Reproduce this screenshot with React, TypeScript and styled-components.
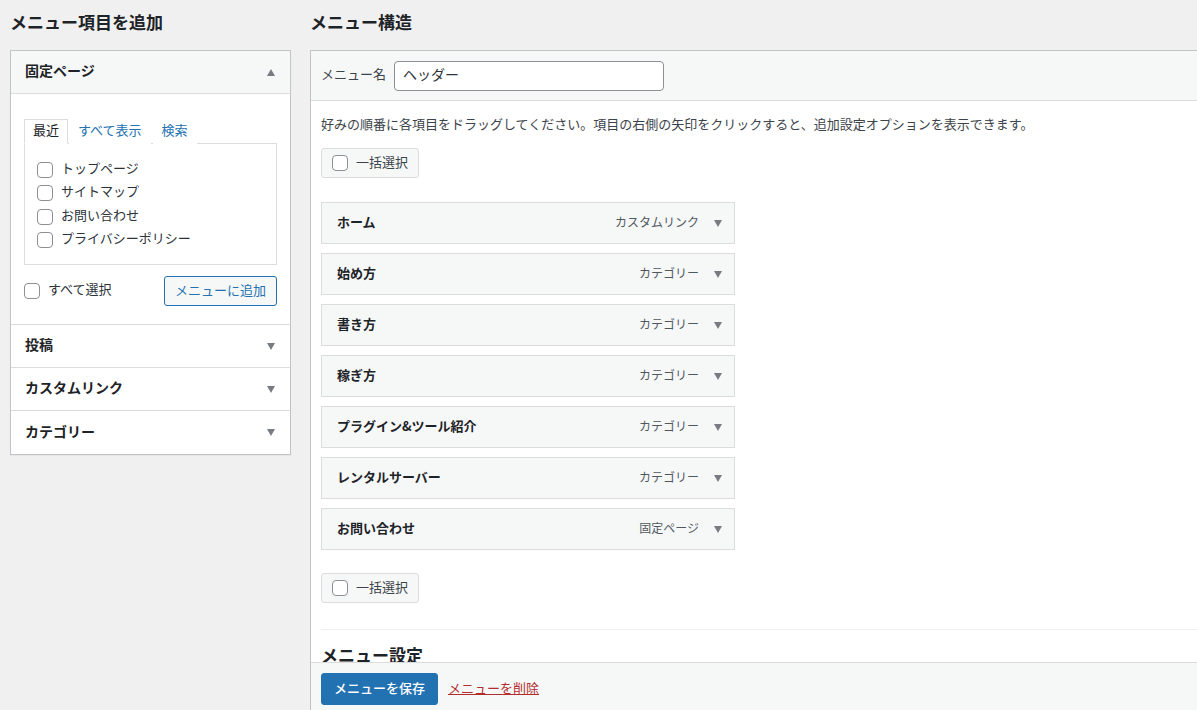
import styled, { createGlobalStyle } from "styled-components";

const GlobalStyle = createGlobalStyle`
  html, body {
    margin: 0;
    padding: 0;
    height: 710px;
    overflow: hidden;
    background: #f0f0f1;
    color: #1d2327;
    font-family: "Noto Sans CJK JP", "Noto Sans", sans-serif;
    font-size: 13px;
  }
  * { box-sizing: border-box; }
`;

const Page = styled.div`
  display: flex;
  gap: 19px;
  padding-left: 10px;
  height: 710px;
`;

const LeftColumn = styled.div`
  width: 281px;
  flex-shrink: 0;
`;

const RightColumn = styled.div`
  flex: 1;
  margin-right: -10px;
  display: flex;
  flex-direction: column;
  min-width: 0;
`;

const Heading = styled.h2`
  margin: 0;
  padding: 10px 0 16px;
  font-size: 17px;
  line-height: 24px;
  font-weight: 700;
`;

const Accordion = styled.div`
  background: #fff;
  border: 1px solid #c3c4c7;
  box-shadow: 0 1px 1px rgba(0, 0, 0, 0.04);
`;

const SectionHeader = styled.div<{ $open?: boolean }>`
  height: 43px;
  display: flex;
  align-items: center;
  justify-content: space-between;
  padding: 0 15px 0 14px;
  font-size: 14px;
  font-weight: 700;
  background: ${(p) => (p.$open ? "#f6f7f7" : "#fff")};
  border-bottom: 1px solid #dcdcde;
  &:last-child {
    border-bottom: none;
  }
`;

/* CJK glyphs sit a little low in the line box, lift them slightly */
const Label = styled.span`
  position: relative;
  top: -2px;
`;

const Arrow = styled.span<{ $up?: boolean }>`
  width: 0;
  height: 0;
  border-left: 4.5px solid transparent;
  border-right: 4.5px solid transparent;
  ${(p) =>
    p.$up
      ? "border-bottom: 7px solid #787c82;"
      : "border-top: 7px solid #787c82;"}
`;

const SectionBody = styled.div`
  padding: 25px 13px 18px;
  border-bottom: 1px solid #dcdcde;
`;

const Tabs = styled.div`
  display: flex;
  align-items: flex-end;
  margin-bottom: -1px;
`;

const Tab = styled.div<{ $active?: boolean }>`
  padding: 0 8px;
  height: 25px;
  line-height: 20px;
  font-size: 13px;
  color: ${(p) => (p.$active ? "#1d2327" : "#2271b1")};
  border: 1px solid ${(p) => (p.$active ? "#dcdcde" : "transparent")};
  border-bottom-color: ${(p) => (p.$active ? "#fff" : "transparent")};
  background: #fff;
  position: relative;
  margin-right: ${(p) => (p.$active ? "1px" : "2px")};
`;

const ListBox = styled.div`
  border: 1px solid #dcdcde;
  height: 122px;
  padding: 18px 12px 0;
  display: flex;
  flex-direction: column;
  gap: 7.3px;
`;

const CheckRow = styled.label`
  display: flex;
  align-items: center;
  gap: 8px;
  font-size: 13px;
  color: #2c3338;
  line-height: 16px;
`;

const Box = styled.span`
  width: 16px;
  height: 16px;
  border: 1px solid #8c8f94;
  border-radius: 4px;
  background: #fff;
  flex-shrink: 0;
`;

const AddRow = styled.div`
  display: flex;
  align-items: center;
  justify-content: space-between;
  margin-top: 11px;
`;

const SecondaryButton = styled.button`
  height: 30px;
  padding: 0 10px 3px;
  font-family: inherit;
  font-size: 13px;
  color: #2271b1;
  background: #f6f7f7;
  border: 1px solid #2271b1;
  border-radius: 3px;
`;

const Panel = styled.div`
  flex: 1;
  background: #fff;
  border: 1px solid #c3c4c7;
  border-bottom: none;
  display: flex;
  flex-direction: column;
  min-height: 0;
  overflow: hidden;
`;

const NameBar = styled.div`
  height: 50px;
  flex-shrink: 0;
  display: flex;
  align-items: center;
  gap: 8px;
  padding: 0 10px;
  background: #f6f7f7;
  border-bottom: 1px solid #dcdcde;
  font-size: 13px;
  color: #3c434a;
`;

const NameInput = styled.div`
  width: 270px;
  height: 30px;
  border: 1px solid #8c8f94;
  border-radius: 4px;
  background: #fff;
  padding: 0 8px 3px;
  display: flex;
  align-items: center;
  font-size: 14px;
  color: #2c3338;
`;

const Body = styled.div`
  flex: 1;
  min-height: 0;
  overflow: hidden;
  padding: 13px 0 0 10px;
`;

const Description = styled.p`
  margin: 0 0 14px;
  font-size: 13px;
  line-height: 20px;
  color: #3c434a;
  white-space: nowrap;
`;

const BulkButton = styled.div`
  display: inline-flex;
  align-items: center;
  gap: 8px;
  height: 30px;
  padding: 0 10px;
  background: #f6f7f7;
  border: 1px solid #dcdcde;
  border-radius: 3px;
  font-size: 13px;
  color: #3c434a;
`;

const MenuList = styled.div`
  display: flex;
  flex-direction: column;
  gap: 9px;
  margin: 24px 0 23px;
  width: 414px;
`;

const MenuItem = styled.div`
  height: 42px;
  display: flex;
  align-items: center;
  padding: 0 12px 0 15px;
  background: #f6f7f7;
  border: 1px solid #dcdcde;
`;

const ItemTitle = styled.span`
  flex: 1;
  margin-bottom: 4px;
  font-size: 13px;
  font-weight: 700;
  color: #1d2327;
`;

const ItemType = styled.span`
  margin: 0 15px 4px 0;
  font-size: 12px;
  color: #50575e;
`;

const Divider = styled.div`
  border-top: 1px solid #f0f0f1;
  margin-top: 26px;
  padding-top: 13px;
`;

const SubHeading = styled.h3`
  margin: 0;
  font-size: 17px;
  line-height: 24px;
  font-weight: 700;
`;

const Footer = styled.div`
  height: 48px;
  flex-shrink: 0;
  display: flex;
  align-items: center;
  gap: 10px;
  padding: 0 10px;
  background: #f6f7f7;
  border-top: 1px solid #dcdcde;
  margin-top: -9px;
  position: relative;
`;

const PrimaryButton = styled.button`
  height: 32px;
  padding: 0 12px 3px;
  margin-top: 4px;
  font-family: inherit;
  font-size: 13px;
  font-weight: 500;
  color: #fff;
  background: #2271b1;
  border: 1px solid #2271b1;
  border-radius: 3px;
`;

const DeleteLink = styled.a`
  margin-top: 1px;
  font-size: 13px;
  color: #b32d2e;
  text-decoration: underline;
`;

const pages = ["トップページ", "サイトマップ", "お問い合わせ", "プライバシーポリシー"];

const items = [
  { title: "ホーム", type: "カスタムリンク" },
  { title: "始め方", type: "カテゴリー" },
  { title: "書き方", type: "カテゴリー" },
  { title: "稼ぎ方", type: "カテゴリー" },
  { title: "プラグイン&ツール紹介", type: "カテゴリー" },
  { title: "レンタルサーバー", type: "カテゴリー" },
  { title: "お問い合わせ", type: "固定ページ" },
];

export default function App() {
  return (
    <>
      <GlobalStyle />
      <Page>
        <LeftColumn>
          <Heading>メニュー項目を追加</Heading>
          <Accordion>
            <SectionHeader $open>
              <Label>固定ページ</Label>
              <Arrow $up />
            </SectionHeader>
            <SectionBody>
              <Tabs>
                <Tab $active>最近</Tab>
                <Tab>すべて表示</Tab>
                <Tab>検索</Tab>
              </Tabs>
              <ListBox>
                {pages.map((p) => (
                  <CheckRow key={p}>
                    <Box />
                    <Label>{p}</Label>
                  </CheckRow>
                ))}
              </ListBox>
              <AddRow>
                <CheckRow>
                  <Box />
                  <Label>すべて選択</Label>
                </CheckRow>
                <SecondaryButton>メニューに追加</SecondaryButton>
              </AddRow>
            </SectionBody>
            {["投稿", "カスタムリンク", "カテゴリー"].map((s) => (
              <SectionHeader key={s}>
                <Label>{s}</Label>
                <Arrow />
              </SectionHeader>
            ))}
          </Accordion>
        </LeftColumn>
        <RightColumn>
          <Heading>メニュー構造</Heading>
          <Panel>
            <NameBar>
              <Label>メニュー名</Label>
              <NameInput>ヘッダー</NameInput>
            </NameBar>
            <Body>
              <Description>
                好みの順番に各項目をドラッグしてください。項目の右側の矢印をクリックすると、追加設定オプションを表示できます。
              </Description>
              <BulkButton>
                <Box />
                <Label>一括選択</Label>
              </BulkButton>
              <MenuList>
                {items.map((it) => (
                  <MenuItem key={it.title}>
                    <ItemTitle>{it.title}</ItemTitle>
                    <ItemType>{it.type}</ItemType>
                    <Arrow />
                  </MenuItem>
                ))}
              </MenuList>
              <BulkButton>
                <Box />
                <Label>一括選択</Label>
              </BulkButton>
              <Divider>
                <SubHeading>メニュー設定</SubHeading>
              </Divider>
            </Body>
            <Footer>
              <PrimaryButton>メニューを保存</PrimaryButton>
              <DeleteLink>メニューを削除</DeleteLink>
            </Footer>
          </Panel>
        </RightColumn>
      </Page>
    </>
  );
}
